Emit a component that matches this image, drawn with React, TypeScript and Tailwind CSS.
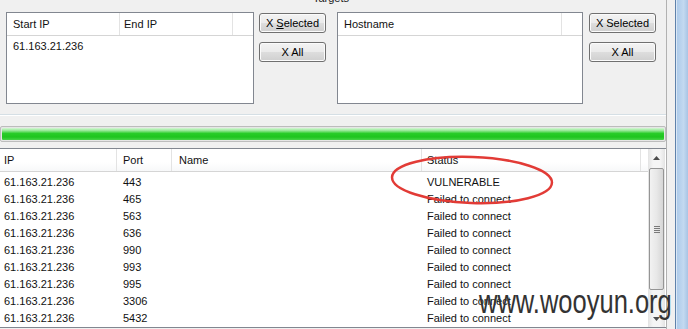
import React from 'react';

const rows = [
  { ip: '61.163.21.236', port: '443', status: 'VULNERABLE' },
  { ip: '61.163.21.236', port: '465', status: 'Failed to connect' },
  { ip: '61.163.21.236', port: '563', status: 'Failed to connect' },
  { ip: '61.163.21.236', port: '636', status: 'Failed to connect' },
  { ip: '61.163.21.236', port: '990', status: 'Failed to connect' },
  { ip: '61.163.21.236', port: '993', status: 'Failed to connect' },
  { ip: '61.163.21.236', port: '995', status: 'Failed to connect' },
  { ip: '61.163.21.236', port: '3306', status: 'Failed to connect' },
  { ip: '61.163.21.236', port: '5432', status: 'Failed to connect' },
];

const WinButton: React.FC<{ children: React.ReactNode }> = ({ children }) => (
  <button className="flex h-[20px] w-[67px] items-center justify-center rounded-[3px] border border-[#707070] bg-[linear-gradient(#f3f3f3_0%,#ebebeb_48%,#dddddd_52%,#cfcfcf_100%)] text-[11px] leading-none text-black shadow-[inset_0_0_0_1px_#fbfbfb]">
    <span>{children}</span>
  </button>
);

const HeaderCell: React.FC<{ label?: string; pad: string }> = ({ label, pad }) => (
  <div className={`flex items-center border-r border-[#e3e3e3] ${pad}`}>{label}</div>
);

export default function App() {
  return (
    <div className="relative flex h-[329px] w-[688px] overflow-hidden bg-[#f0f0f0] font-['Liberation_Sans',Arial,sans-serif] text-[11px] text-[#111]">
      {/* main panel */}
      <div className="flex w-[667px] flex-col border-r border-[#b1b1b1]">
        {/* group caption, cut off at top */}
        <div className="flex h-[4px] justify-center overflow-hidden">
          <span className="-mt-[8px] ml-[-4px] leading-[13px] text-[#1a1a1a]">Targets</span>
        </div>

        {/* targets row */}
        <div className="mt-[8px] flex pl-[6px]">
          <div className="flex h-[92px] w-[248px] flex-col border border-[#828790] bg-white">
            <div className="grid h-[23px] grid-cols-[113px_113px_1fr] border-b border-[#d5d5d5]">
              <HeaderCell label="Start IP" pad="pl-[6px]" />
              <HeaderCell label="End IP" pad="pl-[4px]" />
              <div />
            </div>
            <div className="pl-[6px] pt-[4px] leading-[13px]">61.163.21.236</div>
          </div>
          <div className="ml-[5px] flex flex-col gap-[9px] pt-[1px]">
            <WinButton>
              X <span className="underline">S</span>elected
            </WinButton>
            <WinButton>X All</WinButton>
          </div>
          <div className="ml-[11px] flex h-[92px] w-[246px] flex-col border border-[#828790] bg-white">
            <div className="grid h-[23px] grid-cols-[224px_1fr] border-b border-[#d5d5d5]">
              <HeaderCell label="Hostname" pad="pl-[6px]" />
              <div />
            </div>
          </div>
          <div className="ml-[6px] flex flex-col gap-[9px] pt-[1px]">
            <WinButton>X Selected</WinButton>
            <WinButton>X All</WinButton>
          </div>
        </div>

        {/* group box bottom edge */}
        <div className="mt-[10px] h-[2px] border-t border-[#d5dfe5] bg-white" />

        {/* progress bar */}
        <div className="mt-[10px] h-[16px] rounded-[2px] border border-[#bcbcbc] bg-[#e6e6e6] p-px">
          <div className="h-full w-full rounded-[1px] bg-[linear-gradient(#d6f7d6_0%,#95e895_22%,#29cc29_45%,#1ec51e_75%,#47d347_100%)]" />
        </div>

        {/* results list */}
        <div className="mt-[6px] flex h-[180px] border-y border-[#828790] bg-white">
          <div className="flex w-[648px] flex-col">
            <div className="grid h-[23px] grid-cols-[117px_55px_250px_219px_7px] border-b border-[#d5d5d5] bg-[linear-gradient(#ffffff_0%,#ffffff_60%,#f7f8f9_100%)]">
              <HeaderCell label="IP" pad="pl-[4px]" />
              <HeaderCell label="Port" pad="pl-[6px]" />
              <HeaderCell label="Name" pad="pl-[7px]" />
              <HeaderCell label="Status" pad="pl-[5px]" />
              <div />
            </div>
            <div className="pt-[2px]">
              {rows.map((r, i) => (
                <div key={i} className="grid h-[17px] grid-cols-[117px_55px_250px_226px] items-center leading-[13px]">
                  <div className="pl-[4px]">{r.ip}</div>
                  <div className="pl-[6px]">{r.port}</div>
                  <div />
                  <div className="pl-[5px]">{r.status}</div>
                </div>
              ))}
            </div>
          </div>

          {/* vertical scrollbar */}
          <div className="flex w-[17px] flex-col bg-[linear-gradient(90deg,#e3e3e3_0%,#f5f5f5_30%,#f5f5f5_70%,#e3e3e3_100%)]">
            <div className="flex h-[17px] items-center justify-center">
              <svg width="7" height="4" viewBox="0 0 7 4">
                <path d="M0 4 L3.5 0 L7 4 Z" fill="#4d4d4d" />
              </svg>
            </div>
            <div className="mx-[1px] mt-[2px] flex h-[122px] items-center justify-center rounded-[2px] border border-[#959595] bg-[linear-gradient(90deg,#f2f2f2_0%,#e8e8e8_50%,#d6d6d6_100%)]">
              <div className="flex flex-col gap-[1px]">
                <div className="h-px w-[6px] bg-[#7a7a7a]" />
                <div className="h-px w-[6px] bg-[#7a7a7a]" />
                <div className="h-px w-[6px] bg-[#7a7a7a]" />
                <div className="h-px w-[6px] bg-[#7a7a7a]" />
              </div>
            </div>
            <div className="flex-1" />
            <div className="flex h-[17px] items-center justify-center">
              <svg width="7" height="4" viewBox="0 0 7 4">
                <path d="M0 0 L3.5 4 L7 0 Z" fill="#4d4d4d" />
              </svg>
            </div>
          </div>
        </div>
      </div>

      {/* window background gap + frame */}
      <div className="w-[8px]" />
      <div className="flex w-[13px]">
        <div className="w-px bg-[#5f82ab]" />
        <div className="w-px bg-[#dbe8f6]" />
        <div className="flex-1 bg-[linear-gradient(90deg,#aecbea_0%,#c3d9f0_60%,#a8c4e4_100%)]" />
      </div>

      {/* red annotation ellipse */}
      <svg className="pointer-events-none absolute left-[386px] top-[150px]" width="172" height="60" viewBox="0 0 172 60">
        <ellipse cx="86" cy="30" rx="80" ry="23" transform="rotate(2 86 30)" fill="none" stroke="#e23b36" strokeWidth="2.5" />
      </svg>

      {/* watermark */}
      <div className="pointer-events-none absolute left-[479px] top-[284px] origin-left scale-x-[0.75] whitespace-nowrap font-['Liberation_Sans',Arial,sans-serif] text-[34px] leading-none text-[#333]">
        www.wooyun.org
      </div>
    </div>
  );
}
